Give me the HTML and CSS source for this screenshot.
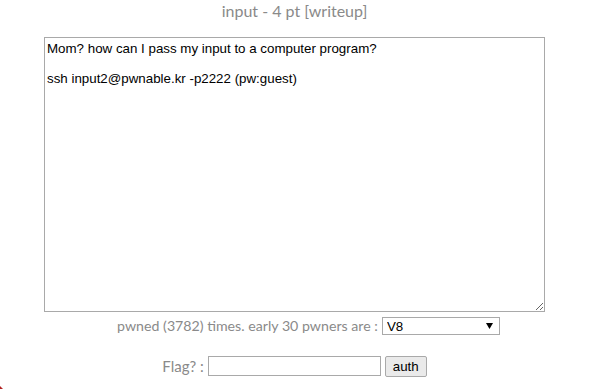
FILE: index.html
```html
<!DOCTYPE html>
<html>
<head>
<meta charset="utf-8">
<link rel="stylesheet" href="styles.css">
</head>
<body>
<div class="page">
  <div class="title">input - 4 pt [writeup]</div>
  <textarea class="desc">Mom? how can I pass my input to a computer program?

ssh input2@pwnable.kr -p2222 (pw:guest)</textarea>
  <div class="pwned">pwned (3782) times. early 30 pwners are : <select class="pwners"><option>V8</option></select></div>
  <div class="flag">Flag? : <input type="text" class="flaginput"> <button class="auth">auth</button></div>
</div>
<div class="corner"></div>
</body>
</html>
```
FILE: styles.css
```css
html, body {
  margin: 0;
  padding: 0;
  background: #fff;
}
.page {
  display: flex;
  flex-direction: column;
  align-items: center;
  font-family: Lato, "Open Sans", sans-serif;
  color: #8a8a8a;
}
.title {
  font-size: 16px;
  line-height: 20px;
  margin-top: 1px;
}
.desc {
  box-sizing: border-box;
  width: 501px;
  height: 275px;
  margin-top: 16px;
  border: 1px solid #a9a9a9;
  padding: 3px 2px 2px;
  font-family: "Liberation Sans", Arial, sans-serif;
  font-size: 13.333px;
  line-height: 15px;
  color: #000;
  resize: both;
  outline: none;
}
.pwned {
  font-size: 14.2px;
  line-height: 20px;
  margin-top: 4px;
  padding-left: 28px;
  display: flex;
  align-items: center;
}
.pwners {
  appearance: none;
  -webkit-appearance: none;
  box-sizing: border-box;
  width: 118px;
  height: 18px;
  margin-left: 4px;
  padding: 0 0 0 4px;
  font-family: "Liberation Sans", Arial, sans-serif;
  font-size: 13.333px;
  color: #000;
  border: 1px solid #a9a9a9;
  border-radius: 0;
  background: #fff url("data:image/svg+xml,%3Csvg xmlns='http://www.w3.org/2000/svg' width='7' height='6'%3E%3Cpath d='M0 0H7L3.5 6Z' fill='%23000'/%3E%3C/svg%3E") no-repeat right 6px center;
}
.flag {
  font-size: 15px;
  line-height: 22px;
  margin-top: 19px;
  display: flex;
  align-items: center;
}
.flaginput {
  box-sizing: border-box;
  width: 173px;
  height: 20px;
  margin-left: 4px;
  border: 1px solid #a9a9a9;
  padding: 1px 2px;
}
.auth {
  box-sizing: border-box;
  height: 21px;
  margin-left: 4px;
  padding: 1px 7px;
  font-family: "Liberation Sans", Arial, sans-serif;
  font-size: 13.333px;
  color: #000;
  background: #eaeaea;
  border: 1px solid #a9a9a9;
  border-radius: 2px;
}
.corner {
  position: absolute;
  left: 0;
  bottom: 0;
  width: 0;
  height: 0;
  border-left: 3px solid #b22222;
  border-top: 3px solid transparent;
}
```
